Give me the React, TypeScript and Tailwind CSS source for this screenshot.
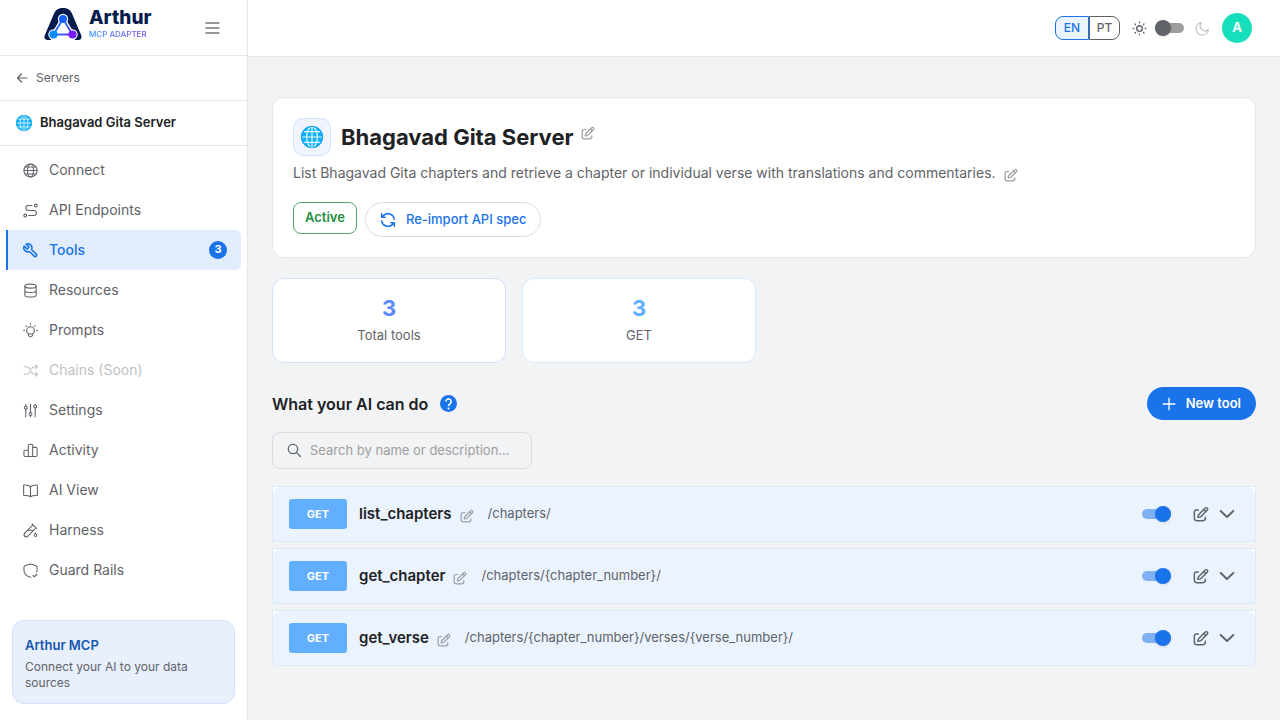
import { useState } from "react";
import type { ReactNode } from "react";

type IconProps = { className?: string; strokeWidth?: number; children?: ReactNode };

function Icon({ className = "size-4", strokeWidth = 1.5, children }: IconProps) {
  return (
    <svg
      viewBox="0 0 24 24"
      fill="none"
      stroke="currentColor"
      strokeWidth={strokeWidth}
      strokeLinecap="round"
      strokeLinejoin="round"
      aria-hidden="true"
      className={`shrink-0 ${className}`}
    >
      {children}
    </svg>
  );
}

function EditIcon({ className, strokeWidth = 2.1 }: IconProps) {
  return (
    <Icon className={className} strokeWidth={strokeWidth}>
      <path d="M8 6H5.500C3.200 6 2 7.100 2 9.500V18.500C2 21 3.200 22 5.500 22h9.500c2.300 0 3.500-1 3.500-3.500V17" />
      <path d="M9 12.500 18 3.300c1.100-1.100 2.400-1.100 3.300-.2.900.9.900 2.300-.1 3.300l-9.200 9.200c-1 1-3.500 1.300-4.800 1.300 0-1.200.6-3.300 1.800-4.400Z" />
      <path d="m16.200 5.200 2.900 2.900" />
    </Icon>
  );
}

function GlobeEmoji({ className }: { className: string }) {
  return (
    <svg viewBox="0 0 24 24" aria-hidden="true" className={`shrink-0 ${className}`}>
      <circle cx="12" cy="12" r="12" fill="#12b0fb" />
      <g fill="none" stroke="#e6f7ff" strokeWidth="1.300">
        <path d="M12 .6v22.800M.6 12h22.800M2.600 6.200h18.800M2.600 17.800h18.800" />
        <ellipse cx="12" cy="12" rx="5.800" ry="11.400" />
      </g>
      <circle cx="12" cy="12" r="11.400" fill="none" stroke="#12a5ee" strokeWidth="1.200" />
    </svg>
  );
}

function LogoMark() {
  return (
    <svg viewBox="0 0 38 34" aria-hidden="true" className="h-[34px] w-[38px] shrink-0">
      <defs>
        <linearGradient id="mark" gradientUnits="userSpaceOnUse" x1="9" y1="12" x2="29" y2="28">
          <stop offset="0" stopColor="#1673ff" />
          <stop offset=".55" stopColor="#2a6bff" />
          <stop offset="1" stopColor="#7a1cff" />
        </linearGradient>
      </defs>
      <path
        d="M10 6.500C11.800 2.600 14.800 1 19 1s7.200 1.600 9 5.500l9.200 21.800c1 2.700-.4 4.700-2.900 4.700H3.700C1.200 33-.2 31 .8 28.300Z"
        fill="#041b4d"
      />
      <path d="M19 12 9.500 27.500h19Z" fill="#fff" stroke="#fff" strokeWidth="4.400" strokeLinejoin="round" />
      <path d="M6 34.500 9.500 29h19l3.500 5.500Z" fill="#fff" />
      <g fill="#fff">
        <circle cx="19" cy="12" r="5.200" />
        <circle cx="9.500" cy="27.500" r="5.200" />
        <circle cx="28.500" cy="27.500" r="5.200" />
      </g>
      <path d="M19 12 9.500 27.500h19Z" fill="none" stroke="url(#mark)" strokeWidth="1.900" />
      <circle cx="19" cy="12" r="4" fill="#1762ff" />
      <circle cx="9.500" cy="27.500" r="4.100" fill="#0a8cff" />
      <circle cx="28.500" cy="27.500" r="4.100" fill="#7a1cff" />
    </svg>
  );
}

const navItems: { label: string; active?: boolean; disabled?: boolean; count?: number; icon: ReactNode }[] = [
  {
    label: "Connect",
    icon: (
      <>
        <circle cx="12" cy="12" r="10.500" />
        <ellipse cx="12" cy="12" rx="4.800" ry="10.500" />
        <path d="M1.500 12h21M3.200 6.500h17.600M3.200 17.500h17.600" />
      </>
    ),
  },
  {
    label: "API Endpoints",
    icon: (
      <>
        <circle cx="20.500" cy="4" r="2.200" />
        <circle cx="3.500" cy="20" r="2.200" />
        <path d="M14.500 4H8.500a4 4 0 0 0 0 8h9a4 4 0 0 1 0 8H9" />
      </>
    ),
  },
  {
    label: "Tools",
    active: true,
    count: 3,
    icon: (
      <path
        transform="translate(25 -1) scale(-1.080 1.080)"
        d="M14.700 6.300a1 1 0 0 0 0 1.400l1.600 1.600a1 1 0 0 0 1.400 0l3.770-3.770a6 6 0 0 1-7.940 7.940l-6.910 6.910a2.120 2.120 0 0 1-3-3l6.910-6.910a6 6 0 0 1 7.940-7.940l-3.760 3.760z"
      />
    ),
  },
  {
    label: "Resources",
    icon: (
      <>
        <ellipse cx="12" cy="5" rx="9" ry="3.200" />
        <path d="M3 5v14c0 1.800 4 3.300 9 3.300s9-1.500 9-3.300V5M3 12c0 1.800 4 3.200 9 3.200s9-1.400 9-3.200" />
      </>
    ),
  },
  {
    label: "Prompts",
    icon: (
      <>
        <path d="M8.500 17.300C6.800 16.100 5.800 14.300 5.800 12.200a6.200 6.200 0 0 1 12.400 0c0 2.100-1 3.900-2.700 5.100l-.5 2.700c-.2 1.400-1 2-3 2s-2.800-.6-3-2ZM8.500 17.600h7" />
        <path d="M12 1v1.500M1 12h1.500M21.500 12H23M4.500 4.500l.8.8M19.500 4.500l-.8.8" />
      </>
    ),
  },
  {
    label: "Chains (Soon)",
    disabled: true,
    icon: (
      <>
        <path d="m20 3 3 3-3 3M20 15l3 3-3 3" />
        <path d="M1.500 6h4c3 0 4.500 1.500 6 4.500l1.500 3c1.500 3 3 4.500 6 4.500h3.500M22.500 6H19c-2.500 0-4 1-5.300 3M1.500 18h4c2.500 0 4-1 5.300-3" />
      </>
    ),
  },
  {
    label: "Settings",
    icon: (
      <>
        <path d="M4.500 2v3M4.500 10v12M12 2v13M12 20v2M19.500 2v1M19.500 8v14" />
        <circle cx="4.500" cy="7.500" r="2.300" />
        <circle cx="12" cy="17.500" r="2.300" />
        <circle cx="19.500" cy="5.500" r="2.300" />
      </>
    ),
  },
  {
    label: "Activity",
    icon: (
      <path d="M8.500 21.500V4c0-1.500.5-2 2-2h3c1.500 0 2 .5 2 2v17.500M8.500 11.500h-5c-1.300 0-2 .6-2 2v6c0 1.500.7 2 2 2h17c1.300 0 2-.5 2-2V9c0-1.400-.7-2-2-2h-5" />
    ),
  },
  {
    label: "AI View",
    icon: (
      <path d="M12 6C10 4 6 3.200 2 3.300c-.7 0-1 .3-1 1V19c0 .7.300 1 1 1 4-.1 8 .3 10 2 2-1.700 6-2.100 10-2 .7 0 1-.3 1-1V4.300c0-.7-.3-1-1-1C18 3.200 14 4 12 6Zm0 0v16" />
    ),
  },
  {
    label: "Harness",
    icon: (
      <>
        <path d="m14.500 1.500 7 7M16 3 3 16c-1.600 1.600-1.600 3.800-.2 5.200s3.700 1.300 5.200-.2L20.500 8M8 11.500h8.500" />
        <path d="M20 16c1.300 1.400 2 2.500 2 3.700a2 2 0 0 1-4 0c0-1.200.7-2.300 2-3.700Z" />
      </>
    ),
  },
  {
    label: "Guard Rails",
    icon: (
      <>
        <path d="M21.800 14.500c.5-1.200.7-2.300.7-3.800V7c0-1.600-.4-2.200-1.800-2.600-2-.5-4-1-5.700-1.900-2-1-4-1-6 0-1.700.9-3.700 1.400-5.700 1.900C1.900 4.800 1.500 5.400 1.500 7v3.700c0 6.300 4.500 10.100 9 11.800.6.200 1.400.2 2 0" />
        <path d="m16 20 2 2 4.500-4" />
      </>
    ),
  },
];

const tools = [
  { name: "list_chapters", method: "GET", path: "/chapters/" },
  { name: "get_chapter", method: "GET", path: "/chapters/{chapter_number}/" },
  { name: "get_verse", method: "GET", path: "/chapters/{chapter_number}/verses/{verse_number}/" },
];

function Sidebar() {
  return (
    <aside className="flex w-[248px] shrink-0 flex-col border-r border-[#e4e6ea] bg-white">
      <div className="flex h-14 items-center justify-between border-b border-[#e4e6ea] pr-6 pl-[44px]">
        <a href="#home" aria-label="Arthur MCP Adapter" className="flex items-center gap-[7px] pb-2">
          <LogoMark />
          <span className="flex flex-col pb-[2px]">
            <span className="text-[19px] leading-[23px] font-extrabold text-[#041b4d]">Arthur</span>
            <span className="bg-linear-to-r from-[#1690ff] to-[#7440f0] bg-clip-text text-[8px] leading-[10px] font-medium text-transparent">
              MCP ADAPTER
            </span>
          </span>
        </a>
        <button type="button" aria-label="Collapse menu" className="text-[#757575]">
          <Icon className="size-[22px]" strokeWidth={1.8}>
            <path d="M5.500 6.500h14M5.500 12h14M5.500 17.500h14" />
          </Icon>
        </button>
      </div>
      <a href="#servers" className="flex h-[45px] items-center gap-2 border-b border-[#e4e6ea] px-4 text-xs text-[#5f6368]">
        <Icon className="size-3" strokeWidth={2.4}>
          <path d="M22 12H4M11 4l-8 8 8 8" />
        </Icon>
        Servers
      </a>
      <div className="flex h-[45px] items-center gap-2 border-b border-[#e4e6ea] px-4 text-[13px] font-semibold text-[#202124]">
        <GlobeEmoji className="size-4" />
        Bhagavad Gita Server
      </div>
      <nav aria-label="Server" className="flex flex-col px-[6px] pt-1">
        {navItems.map((item) => (
          <a
            key={item.label}
            href={item.disabled ? undefined : "#" + item.label}
            aria-disabled={item.disabled}
            aria-current={item.active ? "page" : undefined}
            className={`flex h-10 items-center gap-[11px] rounded-r-md border-l-2 pr-[14px] pl-[15px] text-sm ${
              item.active
                ? "border-[#1a73e8] bg-[#e1edfc] font-medium text-[#1a73e8]"
                : item.disabled
                  ? "border-transparent text-[#bfc1c3]"
                  : "border-transparent text-[#5f6368]"
            }`}
          >
            <Icon className="size-[15px]" strokeWidth={item.active ? 2.3 : 1.7}>
              {item.icon}
            </Icon>
            <span className="grow">{item.label}</span>
            {item.count && (
              <span className="flex size-[18px] items-center justify-center rounded-full bg-[#1a73e8] text-[11px] font-bold text-white">
                {item.count}
              </span>
            )}
          </a>
        ))}
      </nav>
      <div className="mx-3 mt-auto mb-4 rounded-xl border border-[#d2e0ff] bg-[#e8effd] px-3 pt-[14px] pb-3">
        <p className="text-[13px] leading-5 font-semibold text-[#1557b0]">Arthur MCP</p>
        <p className="mt-1 text-xs leading-4 text-[#5f6368]">Connect your AI to your data sources</p>
      </div>
    </aside>
  );
}

function Header() {
  const [dark, setDark] = useState(false);
  return (
    <header className="flex h-[57px] shrink-0 items-center justify-end border-b border-[#e4e6ea] bg-white pr-7">
      <div role="group" aria-label="Language" className="flex h-6 text-xs font-medium">
        <button type="button" aria-pressed="true" className="w-[34px] rounded-l-lg border border-[#1a73e8] bg-[#ebf3ff] text-[#1a73e8]">
          EN
        </button>
        <button type="button" aria-pressed="false" className="w-[31px] rounded-r-lg border border-[#5f6368] text-[#5f6368]">
          PT
        </button>
      </div>
      <Icon className="ml-3 size-[15px] text-[#5f6368]" strokeWidth={2.2}>
        <circle cx="12" cy="12" r="4.500" />
        <path d="M12 2v.8M12 21.200v.8M2 12h.8M21.200 12h.8M4.900 4.900l.6.6M18.500 18.500l.6.6M4.900 19.100l.6-.6M18.500 5.500l.6-.6" />
      </Icon>
      <input
        type="checkbox"
        role="switch"
        aria-label="Dark mode"
        checked={dark}
        onChange={() => setDark(!dark)}
        className="relative mx-2 h-[10px] w-[29px] appearance-none rounded-full bg-[#9e9e9e] before:absolute before:-top-[3px] before:left-0 before:size-4 before:rounded-full before:bg-[#5f6368] before:shadow-sm checked:before:left-[13px]"
      />
      <Icon className="ml-[3px] size-[15px] text-[#bdbdbd]" strokeWidth={1.8}>
        <path d="M21.500 14.100A8.300 8.300 0 0 1 9.900 2.500a10 10 0 1 0 11.600 11.600Z" />
      </Icon>
      <button type="button" aria-label="Account" className="ml-3 size-[30px] rounded-full bg-[#17dfbb] text-[13px] font-bold text-white">
        A
      </button>
    </header>
  );
}

function ServerCard() {
  return (
    <section className="rounded-xl border border-[#e4e6ea] bg-white p-5">
      <div className="flex items-center">
        <span className="flex size-[38px] items-center justify-center rounded-[10px] border border-[#d2e0ff] bg-[#eff4ff]">
          <GlobeEmoji className="size-[22px]" />
        </span>
        <h1 className="ml-[10px] text-[22px] leading-8 font-bold text-[#202124]">Bhagavad Gita Server</h1>
        <button type="button" aria-label="Edit name" className="ml-2 pb-2 text-[#9e9e9e]">
          <EditIcon className="size-[14px]" />
        </button>
      </div>
      <div className="mt-[6px] flex items-center">
        <p className="text-sm leading-[22px] text-[#5f6368]">
          List Bhagavad Gita chapters and retrieve a chapter or individual verse with translations and commentaries.
        </p>
        <button type="button" aria-label="Edit description" className="ml-2 pt-1 text-[#9e9e9e]">
          <EditIcon className="size-[14px]" />
        </button>
      </div>
      <div className="mt-[18px] flex items-start gap-2">
        <span className="flex h-8 items-center rounded-lg border border-[#4fa568] px-[11px] text-[13px] font-semibold text-[#1e8e3e]">
          Active
        </span>
        <button type="button" className="flex h-[35px] items-center gap-[10px] rounded-full border border-[#dadce0] px-[14px] text-[13px] font-medium text-[#1a73e8]">
          <Icon className="size-4" strokeWidth={2.3}>
            <path d="M21.500 10.500A9.700 9.700 0 0 0 4.500 6M2.500 13.500A9.700 9.700 0 0 0 19.500 18M2.500 2.500V8h5.200M21.500 21.500V16h-5.200" />
          </Icon>
          Re-import API spec
        </button>
      </div>
    </section>
  );
}

function ToolRow({ name, method, path }: { name: string; method: string; path: string }) {
  const [enabled, setEnabled] = useState(true);
  return (
    <li className="border border-[#dbeafe] bg-white last:rounded-b-md">
      <div className="flex h-[54px] items-center rounded-t-lg bg-[#ebf3ff] pr-5 pl-4">
        <span className="flex h-[30px] w-[58px] items-center justify-center rounded-[3px] bg-[#61affe] text-[11px] font-bold text-white">
          {method}
        </span>
        <h3 className="ml-3 text-[15px] font-semibold text-[#202124]">{name}</h3>
        <button type="button" aria-label={"Rename " + name} className="ml-2 pt-[3px] text-[#9aa0a6]">
          <EditIcon className="size-[14px]" />
        </button>
        <span className="ml-[14px] text-[13px] text-[#5f6368]">{path}</span>
        <input
          type="checkbox"
          role="switch"
          aria-label={"Enable " + name}
          checked={enabled}
          onChange={() => setEnabled(!enabled)}
          className="relative ml-auto h-[10px] w-[29px] appearance-none rounded-full bg-[#bdbdbd] before:absolute before:-top-[3px] before:left-0 before:size-4 before:rounded-full before:bg-white before:shadow-sm checked:bg-[#7fb1f3] checked:before:left-[13px] checked:before:bg-[#1a73e8]"
        />
        <button type="button" aria-label={"Edit " + name} className="ml-[22px] text-[#5f6368]">
          <EditIcon className="size-4" strokeWidth={2.2} />
        </button>
        <button type="button" aria-label={"Expand " + name} className="ml-[10px] text-[#5f6368]">
          <Icon className="size-4" strokeWidth={2.8}>
            <path d="m2.500 7.500 9.500 9 9.500-9" />
          </Icon>
        </button>
      </div>
    </li>
  );
}

export default function App() {
  return (
    <div className="flex min-h-screen bg-[#f1f3f5] font-['Inter','Liberation_Sans',sans-serif]">
      <Sidebar />
      <div className="flex min-w-0 grow flex-col">
        <Header />
        <main className="flex flex-col px-6 pt-10 pb-6">
          <ServerCard />
          <section aria-label="Totals" className="mt-5 grid grid-cols-4 gap-4">
            <div className="rounded-xl border border-[#d2e0ff] bg-white pt-[13px] pb-4 text-center">
              <p className="text-[22px] leading-8 font-bold text-[#5a8bff]">3</p>
              <p className="text-[13px] leading-[22px] text-[#5f6368]">Total tools</p>
            </div>
            <div className="rounded-xl border border-[#d6eaff] bg-white pt-[13px] pb-4 text-center">
              <p className="text-[22px] leading-8 font-bold text-[#61affe]">3</p>
              <p className="text-[13px] leading-[22px] text-[#5f6368]">GET</p>
            </div>
          </section>
          <div className="mt-6 flex items-center">
            <h2 className="text-base font-semibold text-[#202124]">What your AI can do</h2>
            <button type="button" aria-label="Help" className="ml-3">
              <svg viewBox="0 0 24 24" aria-hidden="true" className="size-[17px]">
                <circle cx="12" cy="12" r="12" fill="#1a73e8" />
                <path d="M8.300 9.200a3.700 3.700 0 1 1 6.200 2.700c-1.400 1.300-2.500 1.900-2.500 4" fill="none" stroke="#fff" strokeWidth="2.200" />
                <circle cx="12" cy="19" r="1.500" fill="#fff" />
              </svg>
            </button>
            <button type="button" className="ml-auto flex h-[33px] items-center gap-[10px] rounded-full bg-[#1a73e8] px-[15px] text-[13px] font-semibold text-white">
              <Icon className="size-[14px]" strokeWidth={2.2}>
                <path d="M12 2v20M2 12h20" />
              </Icon>
              New tool
            </button>
          </div>
          <label className="mt-3 flex h-[37px] w-[260px] items-center gap-2 rounded-lg border border-[#d9dbde] pr-2 pl-[14px] text-[#5f6368]">
            <Icon className="size-[15px]" strokeWidth={2}>
              <circle cx="9.500" cy="9.500" r="7.500" />
              <path d="m15 15 6.500 6.500" />
            </Icon>
            <input
              type="search"
              aria-label="Search tools"
              placeholder="Search by name or description…"
              className="min-w-0 grow bg-transparent text-[13px] outline-none placeholder:text-[#9e9e9e]"
            />
          </label>
          <ul className="mt-[17px] flex flex-col gap-[6px]">
            {tools.map((tool) => (
              <ToolRow key={tool.name} {...tool} />
            ))}
          </ul>
        </main>
      </div>
    </div>
  );
}
